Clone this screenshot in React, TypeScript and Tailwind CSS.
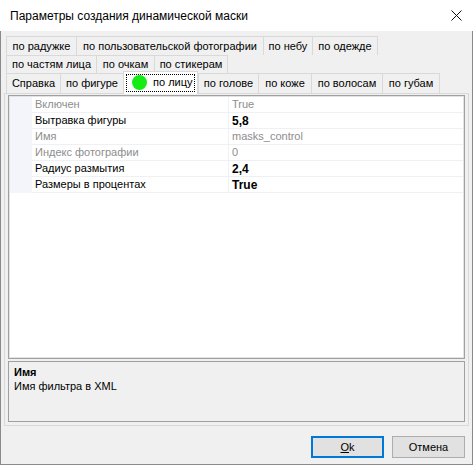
import React from "react";

const font = { fontFamily: '"Liberation Sans", Arial, sans-serif' };

type Tab = { label: string; w: number };

const row1: Tab[] = [
  { label: "по радужке", w: 70 },
  { label: "по пользовательской фотографии", w: 187 },
  { label: "по небу", w: 49 },
  { label: "по одежде", w: 66 },
];
const row2: Tab[] = [
  { label: "по частям лица", w: 90 },
  { label: "по очкам", w: 58 },
  { label: "по стикерам", w: 74 },
];

function TabItem({ t, last }: { t: Tab; last?: boolean }) {
  return (
    <div
      style={{ width: t.w }}
      className={
        "h-full flex items-center justify-center border-t border-l border-[#d9d9d9] bg-[#f0f0f0] text-black whitespace-nowrap " +
        (last ? "border-r" : "")
      }
    >
      {t.label}
    </div>
  );
}

const rows = [
  { n: "Включен", v: "True", dis: true, bold: false },
  { n: "Вытравка фигуры", v: "5,8", dis: false, bold: true },
  { n: "Имя", v: "masks_control", dis: true, bold: false },
  { n: "Индекс фотографии", v: "0", dis: true, bold: false },
  { n: "Радиус размытия", v: "2,4", dis: false, bold: true },
  { n: "Размеры в процентах", v: "True", dis: false, bold: true },
];

export default function App() {
  return (
    <div className="w-[473px] h-[465px] bg-[#f0f0f0] flex flex-col text-[11px] overflow-hidden" style={font}>
      {/* Title bar */}
      <div className="h-[31px] bg-white flex items-center justify-between pl-[10px] pr-[11px] shrink-0">
        <span className="text-[12px] text-black" style={font}>
          Параметры создания динамической маски
        </span>
        <svg width="11" height="11" viewBox="0 0 11 11">
          <path d="M0.5 0.5 L10.5 10.5 M10.5 0.5 L0.5 10.5" stroke="#111" strokeWidth="1" />
        </svg>
      </div>

      <div className="flex-1 flex flex-col border-l border-r border-b border-[#8a8a8a]">
        {/* Tabs */}
        <div className="pl-[5px] pt-[5px] flex flex-col">
          <div className="flex h-[19px]">
            {row1.map((t, i) => (
              <TabItem key={t.label} t={t} last={i === row1.length - 1} />
            ))}
          </div>
          <div className="flex h-[18px]">
            {row2.map((t, i) => (
              <TabItem key={t.label} t={t} last={i === row2.length - 1} />
            ))}
          </div>
          <div className="flex h-[20px] items-end">
            <TabItem t={{ label: "Справка", w: 54 }} />
            <TabItem t={{ label: "по фигуре", w: 63 }} />
            <div className="relative z-10 w-[75px] h-[23px] -mb-px bg-white border-t border-l border-r border-[#d9d9d9] flex items-center px-[2px] pb-px">
              <div className="w-full h-[18px] border border-dotted border-black flex items-center pl-[5px] gap-[6px]">
                <div className="w-[15px] h-[15px] rounded-full bg-[#14ec14]" />
                <span className="text-black">по лицу</span>
              </div>
            </div>
            <TabItem t={{ label: "по голове", w: 60 }} />
            <TabItem t={{ label: "по коже", w: 53 }} />
            <TabItem t={{ label: "по волосам", w: 71 }} />
            <TabItem t={{ label: "по губам", w: 58 }} last />
          </div>
        </div>

        {/* Tab page */}
        <div className="ml-[3px] mr-[3px] h-[333px] border border-[#d9d9d9] bg-[#f0f0f0] flex flex-col px-[3px] pt-[1px] pb-[3px] gap-[2px]">
          {/* Property grid */}
          <div className="flex-1 bg-white border border-[#a0a0a0] shadow-[inset_0_0_0_1px_#e3e3e3] p-[1px] flex flex-col">
            {rows.map((r) => (
              <div key={r.n} className="flex h-[16px]">
                <div className="w-[22px] bg-[#f3f5fa] shrink-0" />
                <div
                  className={
                    "w-[197px] shrink-0 pl-[3px] border-b border-r border-[#eef0f5] flex items-center whitespace-nowrap " +
                    (r.dis ? "text-[#8d8d8d]" : "text-black")
                  }
                >
                  {r.n}
                </div>
                <div
                  className={
                    "flex-1 pl-[3px] border-b border-[#eef0f5] flex items-center " +
                    (r.dis ? "text-[#8d8d8d]" : "text-black") +
                    (r.bold ? " font-bold text-[12px]" : "")
                  }
                >
                  {r.v}
                </div>
              </div>
            ))}
          </div>
          {/* Help box */}
          <div className="h-[61px] shrink-0 border border-[#a0a0a0] bg-[#f0f0f0] px-[5px] pt-[3px] text-black leading-[14px]">
            <div className="font-bold">Имя</div>
            <div>Имя фильтра в XML</div>
          </div>
        </div>

        {/* Buttons */}
        <div className="flex justify-end gap-[8px] pr-[7px] pt-[10px]">
          <button className="w-[73px] h-[22px] bg-[#e1e1e1] border-2 border-[#0078d7] text-black text-[11px]" style={font}>
            <span className="underline">O</span>k
          </button>
          <button className="w-[73px] h-[22px] bg-[#e1e1e1] border border-[#adadad] text-black text-[11px]" style={font}>
            Отмена
          </button>
        </div>
      </div>
    </div>
  );
}
